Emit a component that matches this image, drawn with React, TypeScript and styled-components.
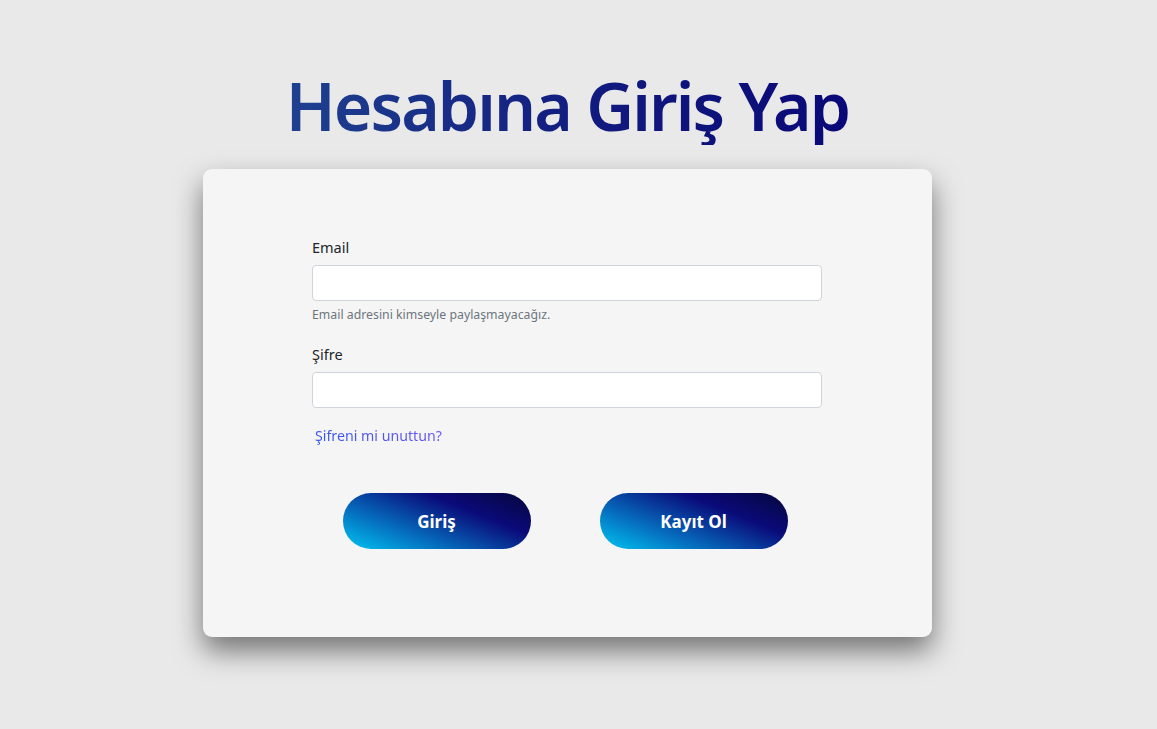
import React from "react";
import styled, { createGlobalStyle } from "styled-components";

const GlobalStyle = createGlobalStyle`
  html, body {
    margin: 0;
    padding: 0;
    background: #e9e9e9;
    font-family: "Noto Sans", "Open Sans", sans-serif;
  }
  * { box-sizing: border-box; }
`;

const Page = styled.main`
  display: flex;
  flex-direction: column;
  align-items: center;
  padding: 66px 22px 0 0;
  min-height: 729px;
`;

const Title = styled.h1`
  margin: 0 0 24px;
  font-size: 66px;
  font-weight: 600;
  line-height: 1.2;
  letter-spacing: -1.9px;
  background: linear-gradient(90deg, #1f4190 0%, #111a7e 55%, #0a0878 100%);
  -webkit-background-clip: text;
  background-clip: text;
  color: transparent;
`;

const Card = styled.section`
  width: 729px;
  height: 468px;
  background: #f5f5f5;
  border-radius: 9px;
  box-shadow: 0 14px 28px rgba(0, 0, 0, 0.5);
  padding: 67px 110px 0 109px;
`;

const Form = styled.form`
  width: 510px;
  display: flex;
  flex-direction: column;
`;

const Field = styled.div`
  display: flex;
  flex-direction: column;
  margin-bottom: ${(p: { $gap: number }) => p.$gap}px;
`;

const Label = styled.label`
  font-size: 14.5px;
  color: #212529;
  margin-bottom: 7px;
  line-height: 22px;
`;

const Input = styled.input`
  height: 36px;
  width: 100%;
  border: 1px solid #ced4da;
  border-radius: 4px;
  background: #fff;
  font: inherit;
  padding: 0 12px;
`;

const Hint = styled.small`
  margin-top: 5px;
  font-size: 12.3px;
  color: #6c757d;
  line-height: 18px;
`;

const ForgotLink = styled.a`
  margin: 0 0 0 3px;
  font-size: 14.2px;
  line-height: 22px;
  text-decoration: none;
  align-self: flex-start;
  background: linear-gradient(90deg, #3557f2, #6b55f0);
  -webkit-background-clip: text;
  background-clip: text;
  color: transparent;
`;

const Buttons = styled.div`
  display: flex;
  justify-content: center;
  gap: 69px;
  margin-top: 46px;
  padding-right: 4px;
`;

const GradientButton = styled.button`
  width: 188px;
  height: 56px;
  border: none;
  border-radius: 28px;
  background: linear-gradient(22deg, #00c6f2 0%, #0577c4 28%, #0a0a7a 68%, #06063a 100%);
  color: #fff;
  font-family: inherit;
  font-size: 17px;
  font-weight: 700;
  cursor: pointer;
`;

export default function App() {
  return (
    <>
      <GlobalStyle />
      <Page>
        <Title>Hesabına Giriş Yap</Title>
        <Card>
          <Form onSubmit={(e) => e.preventDefault()}>
            <Field $gap={19}>
              <Label htmlFor="email">Email</Label>
              <Input id="email" type="email" />
              <Hint>Email adresini kimseyle paylaşmayacağız.</Hint>
            </Field>
            <Field $gap={17}>
              <Label htmlFor="password">Şifre</Label>
              <Input id="password" type="password" />
            </Field>
            <ForgotLink href="#">Şifreni mi unuttun?</ForgotLink>
            <Buttons>
              <GradientButton type="submit">Giriş</GradientButton>
              <GradientButton type="button">Kayıt Ol</GradientButton>
            </Buttons>
          </Form>
        </Card>
      </Page>
    </>
  );
}
